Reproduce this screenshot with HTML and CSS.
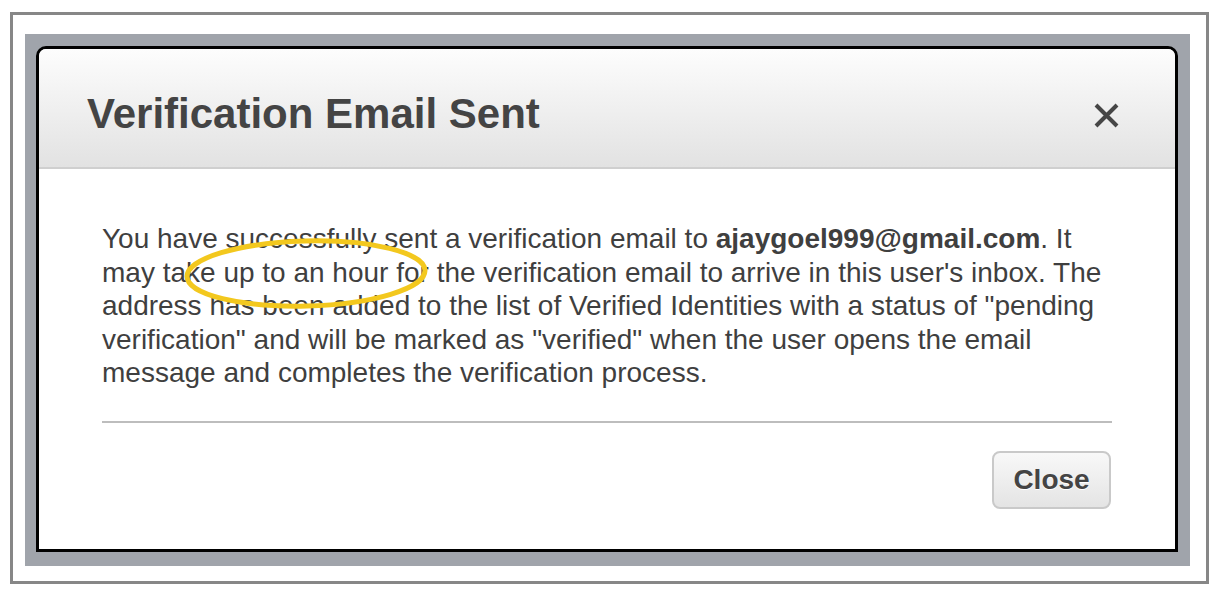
FILE: index.html
```html
<!DOCTYPE html>
<html lang="en">
<head>
    <meta charset="UTF-8">
    <title>Verification Email Sent</title>
    <link rel="stylesheet" href="styles.css">
</head>
<body>
    <div class="frame">
        <div class="backdrop">
            <div class="modal">
                <div class="modal-header">
                    <h3>Verification Email Sent</h3>
                    <svg class="close-x" width="27" height="27" viewBox="0 0 27 27">
                        <path d="M3 3 L24 24 M24 3 L3 24" stroke="#464646" stroke-width="4" fill="none"/>
                    </svg>
                </div>

                <div class="modal-body">
                    <p>You have successfully sent a verification email to <strong>ajaygoel999@gmail.com</strong>. It may take up to an hour for the verification email to arrive in this user's inbox. The address has been added to the list of Verified Identities with a status of "pending verification" and will be marked as "verified" when the user opens the email message and completes the verification process.</p>

                    <!-- annotation drawn over the text -->
                    <svg class="highlight" width="260" height="90" viewBox="0 0 260 90">
                        <ellipse cx="126" cy="43.5" rx="119" ry="32.5" transform="rotate(-1.5 126 43.5)" fill="none" stroke="#f3c81e" stroke-width="5"/>
                    </svg>

                    <hr>

                    <div class="modal-footer">
                        <button>Close</button>
                    </div>
                </div>
            </div>
        </div>
    </div>
</body>
</html>
```

FILE: styles.css
```css
* {
    margin: 0;
    padding: 0;
    box-sizing: border-box;
}

body {
    background: #fff;
    font-family: 'Liberation Sans', Arial, sans-serif;
    color: #3f3f3f;
}

.frame {
    width: 1199px;
    height: 572px;
    margin: 12px 0 0 10px;
    border: 3px solid #878787;
    padding: 19px 16px 15px 12px;
}

.backdrop {
    width: 1165px;
    height: 532px;
    background: #a0a4ab;
    padding: 12px 12px 14px 11px;
}

.modal {
    width: 1142px;
    height: 506px;
    background: #fff;
    border: 3px solid #000;
    border-radius: 10px 10px 0 0;
    overflow: hidden;
}

.modal-header {
    display: flex;
    justify-content: space-between;
    align-items: center;
    height: 120px;
    padding: 41px 55px 29px 48px;
    background: linear-gradient(#fdfdfd, #e2e2e2);
    border-bottom: 2px solid #cfcfcf;
}

.modal-header h3 {
    font-size: 42px;
    line-height: 48px;
    font-weight: 700;
    color: #444;
}

.close-x {
    margin-top: 3px;
}

.modal-body {
    position: relative;
    padding: 53px 63px 40px;
}

.modal-body p {
    font-size: 28px;
    line-height: 33.5px;
}

.modal-body strong {
    font-weight: 700;
}

.highlight {
    position: absolute;
    left: 141px;
    top: 61px;
}

hr {
    border: none;
    height: 2px;
    background: #bdbdbd;
    margin-top: 31px;
}

.modal-footer {
    display: flex;
    justify-content: flex-end;
    margin-top: 28.5px;
}

button {
    width: 119px;
    height: 58px;
    border: 2px solid #c9c9c9;
    border-radius: 8px;
    background: linear-gradient(#f8f8f8, #e4e4e4);
    font-family: 'Liberation Sans', Arial, sans-serif;
    font-size: 28px;
    font-weight: 700;
    color: #444;
    text-shadow: 0 1px 0 #fff;
    margin-right: 1px;
    cursor: pointer;
}
```
